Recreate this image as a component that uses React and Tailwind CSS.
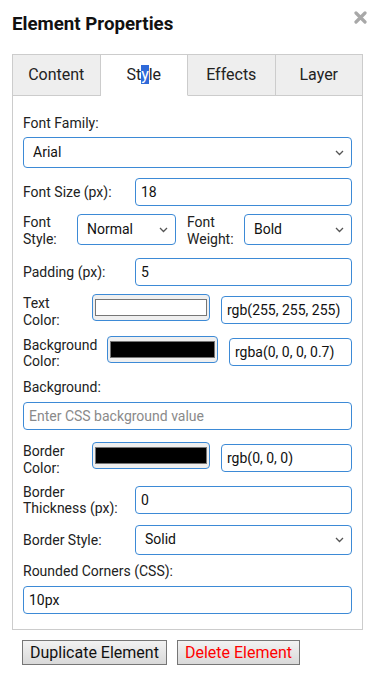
import React, { useState } from 'react'

const font = { fontFamily: 'Roboto, "Liberation Sans", sans-serif' }

const Chevron = () => (
  <svg className="pointer-events-none absolute right-[8px] top-1/2 -translate-y-1/2" width="9" height="6" viewBox="0 0 9 6">
    <path d="M1 1 L4.5 4.5 L8 1" fill="none" stroke="#555" strokeWidth="1.3" />
  </svg>
)

const Select = ({ value, options, className = '', h = 'h-[31px]' }) => (
  <div className={`relative ${className}`}>
    <select
      defaultValue={value}
      className={`w-full ${h} appearance-none rounded-[4px] border border-[#3d8ad6] bg-white pl-[9px] pr-6 text-[14px] text-[#111] outline-none`}
    >
      {options.map(o => <option key={o}>{o}</option>)}
    </select>
    <Chevron />
  </div>
)

const TextInput = ({ value, placeholder, className = '' }) => (
  <input
    defaultValue={value}
    placeholder={placeholder}
    className={`h-[28px] rounded-[4px] border border-[#3d8ad6] bg-white px-[5px] text-[14px] text-[#111] outline-none placeholder:text-[#8a8a8a] ${className}`}
  />
)

const ColorSwatch = ({ color, className = '' }) => (
  <div className={`h-[27px] rounded-[4px] border border-[#3d8ad6] bg-[#efefef] px-[2px] py-[4px] ${className}`}>
    <div className="h-[17px] border border-[#767676]" style={{ background: color }} />
  </div>
)

const Label = ({ children, className = '' }) => (
  <div className={`text-[14px] leading-[16.4px] text-[#222] ${className}`}>{children}</div>
)

const App = () => {
  const [tab, setTab] = useState('Style')
  const tabs = ['Content', 'Style', 'Effects', 'Layer']

  return (
    <div className="relative min-h-[678px] bg-white px-[12px] pt-[14px]" style={font}>
      <h2 className="text-[18.7px] font-bold leading-[21px] text-[#111]">Element Properties</h2>
      <button className="absolute right-[8px] top-[11px]" aria-label="close">
        <svg width="13" height="13" viewBox="0 0 13 13">
          <path d="M2 2 L11 11 M11 2 L2 11" stroke="#a8a8a8" strokeWidth="3.2" strokeLinecap="round" />
        </svg>
      </button>

      <div className="mt-[19px] flex border-l border-t border-[#ccc]">
        {tabs.map(t => (
          <button
            key={t}
            onClick={() => setTab(t)}
            className={`h-[41px] flex-1 border-r border-[#ccc] text-[16px] text-[#222] ${tab === t ? 'border-b border-b-white bg-white' : 'border-b bg-[#eee]'}`}
          >
            {t === 'Style' ? (
              <>St<span className="bg-[#2f6ad9] text-white">y</span>le</>
            ) : t}
          </button>
        ))}
      </div>

      <div className="border border-t-0 border-[#ccc] px-[10px] pb-[15px] pt-[19px]">
        <Label>Font Family:</Label>
        <Select className="mt-[6px]" value="Arial" options={['Arial', 'Verdana', 'Georgia']} />

        <div className="mt-[10px] flex items-center">
          <Label className="w-[112px]">Font Size (px):</Label>
          <TextInput className="flex-1" value="18" />
        </div>

        <div className="mt-[8px] flex items-start">
          <Label className="w-[54px]">Font<br />Style:</Label>
          <Select className="w-[99px]" value="Normal" options={['Normal', 'Italic']} />
          <Label className="ml-[11px] w-[57px]">Font<br />Weight:</Label>
          <Select className="flex-1" value="Bold" options={['Normal', 'Bold']} />
        </div>

        <div className="mt-[11px] flex items-center">
          <Label className="w-[112px]">Padding (px):</Label>
          <TextInput className="flex-1" value="5" />
        </div>

        <div className="mt-[8px] flex items-start">
          <Label className="w-[69px] pt-[1px]">Text<br />Color:</Label>
          <ColorSwatch className="w-[118px]" color="#ffffff" />
          <TextInput className="ml-[11px] mt-[2px] min-w-0 flex-1" value="rgb(255, 255, 255)" />
        </div>

        <div className="mt-[8px] flex items-start">
          <Label className="w-[84px] pt-[1px]">Background<br />Color:</Label>
          <ColorSwatch className="w-[111px]" color="#000000" />
          <TextInput className="ml-[11px] mt-[2px] min-w-0 flex-1" value="rgba(0, 0, 0, 0.7)" />
        </div>

        <Label className="mt-[9px]">Background:</Label>
        <TextInput className="mt-[7px] w-full" placeholder="Enter CSS background value" />

        <div className="mt-[12px] flex items-start">
          <Label className="w-[69px] pt-[1px]">Border<br />Color:</Label>
          <ColorSwatch className="w-[118px]" color="#000000" />
          <TextInput className="ml-[11px] mt-[2px] min-w-0 flex-1" value="rgb(0, 0, 0)" />
        </div>

        <div className="mt-[8px] flex items-center">
          <Label className="w-[112px]">Border<br />Thickness (px):</Label>
          <TextInput className="flex-1" value="0" />
        </div>

        <div className="mt-[8px] flex items-center">
          <Label className="w-[112px]">Border Style:</Label>
          <Select className="flex-1" h="h-[30px]" value="Solid" options={['Solid', 'Dashed', 'Dotted']} />
        </div>

        <Label className="mt-[8px]">Rounded Corners (CSS):</Label>
        <TextInput className="mt-[7px] w-full" value="10px" />
      </div>

      <div className="ml-[10px] mt-[10px] flex gap-[10px]">
        <button className="h-[25px] border border-[#767676] bg-gradient-to-b from-[#f2f2f2] to-[#d9d9d9] px-[7px] text-[16px] leading-none text-[#111]">
          Duplicate Element
        </button>
        <button className="h-[25px] border border-[#767676] bg-gradient-to-b from-[#f2f2f2] to-[#d9d9d9] px-[7px] text-[16px] leading-none text-[#ff0000]">
          Delete Element
        </button>
      </div>
    </div>
  )
}

export default App
